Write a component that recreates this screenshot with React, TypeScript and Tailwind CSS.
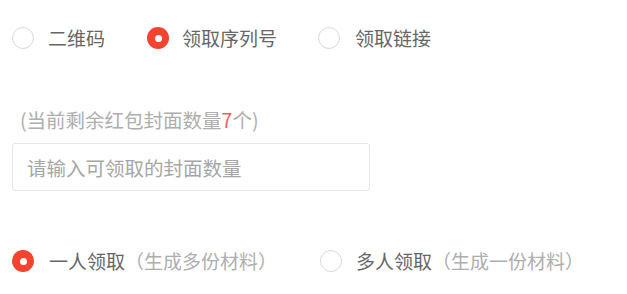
const font = { fontFamily: '"Noto Sans CJK SC", "Noto Sans", sans-serif' };

function Radio({ checked }: { checked: boolean }) {
  return checked ? (
    <span className="flex h-[22px] w-[22px] shrink-0 items-center justify-center rounded-full bg-[#f4432f]">
      <span className="h-[7px] w-[7px] rounded-full bg-white" />
    </span>
  ) : (
    <span className="h-[22px] w-[22px] shrink-0 rounded-full border border-[#d9d9d9] bg-white" />
  );
}

export default function App() {
  return (
    <div className="h-[294px] w-[627px] bg-white pl-[12px] pt-[27px]" style={font}>
      {/* 类型 */}
      <div className="flex h-[22px] items-center text-[19px] leading-[22px] text-[#666]">
        <Radio checked={false} />
        <span className="ml-[14px] mr-[42px]">二维码</span>
        <Radio checked />
        <span className="ml-[13px] mr-[41px]">领取序列号</span>
        <Radio checked={false} />
        <span className="ml-[15px]">领取链接</span>
      </div>

      {/* 数量 */}
      <div className="mt-[60px] pl-[8px] text-[19.5px] leading-[22px] text-[#aeaeae]">
        (当前剩余红包封面数量<span className="text-[#f0605a]">7</span>个)
      </div>
      <input
        className="mt-[12px] h-[48px] w-[358px] rounded-[3px] border border-[#e6e6e6] px-[14px] text-[19.5px] text-[#666] outline-none placeholder:text-[#a6a6a6]"
        placeholder="请输入可领取的封面数量"
      />

      {/* 领取方式 */}
      <div className="mt-[59px] flex h-[22px] items-center text-[19px] leading-[22px]">
        <Radio checked />
        <span className="ml-[15px] text-[#666]">一人领取</span>
        <span className="mr-[43px] text-[#aeaeae]">（生成多份材料）</span>
        <Radio checked={false} />
        <span className="ml-[14px] text-[#666]">多人领取</span>
        <span className="text-[#aeaeae]">（生成一份材料）</span>
      </div>
    </div>
  );
}
